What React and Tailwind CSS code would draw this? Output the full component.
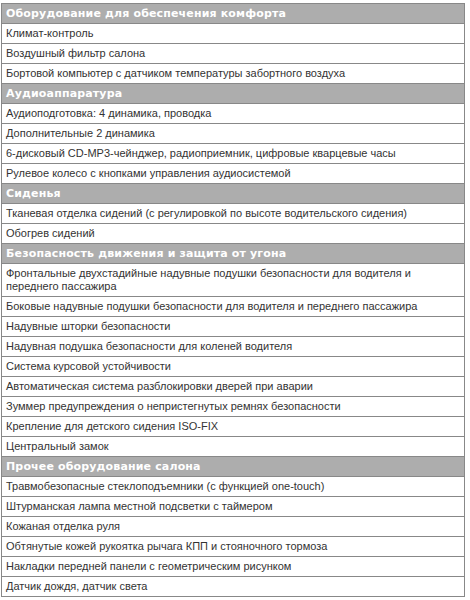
import React from 'react';

const sections = [
  {
    title: 'Оборудование для обеспечения комфорта',
    items: [
      'Климат-контроль',
      'Воздушный фильтр салона',
      'Бортовой компьютер с датчиком температуры забортного воздуха',
    ],
  },
  {
    title: 'Аудиоаппаратура',
    items: [
      'Аудиоподготовка: 4 динамика, проводка',
      'Дополнительные 2 динамика',
      '6-дисковый CD-MP3-чейнджер, радиоприемник, цифровые кварцевые часы',
      'Рулевое колесо с кнопками управления аудиосистемой',
    ],
  },
  {
    title: 'Сиденья',
    items: [
      'Тканевая отделка сидений (с регулировкой по высоте водительского сидения)',
      'Обогрев сидений',
    ],
  },
  {
    title: 'Безопасность движения и защита от угона',
    items: [
      'Фронтальные двухстадийные надувные подушки безопасности для водителя и переднего пассажира',
      'Боковые надувные подушки безопасности для водителя и переднего пассажира',
      'Надувные шторки безопасности',
      'Надувная подушка безопасности для коленей водителя',
      'Система курсовой устойчивости',
      'Автоматическая система разблокировки дверей при аварии',
      'Зуммер предупреждения о непристегнутых ремнях безопасности',
      'Крепление для детского сидения ISO-FIX',
      'Центральный замок',
    ],
  },
  {
    title: 'Прочее оборудование салона',
    items: [
      'Травмобезопасные стеклоподъемники (с функцией one-touch)',
      'Штурманская лампа местной подсветки с таймером',
      'Кожаная отделка руля',
      'Обтянутые кожей рукоятка рычага КПП и стояночного тормоза',
      'Накладки передней панели с геометрическим рисунком',
      'Датчик дождя, датчик света',
    ],
  },
];

export default function App() {
  return (
    <div className="bg-white min-h-[600px] pt-[3px] pl-[1px] font-['Liberation_Sans',sans-serif] text-[11px] leading-[13px] text-[#333]">
      <table className="w-[464px] border-collapse">
        <tbody>
          {sections.map((s) => (
            <React.Fragment key={s.title}>
              <tr>
                <td className="border border-[#888] bg-[#adadad] text-white font-bold font-['DejaVu_Sans',sans-serif] tracking-[0.15px] pl-[4px] pr-2 py-[3px]">
                  {s.title}
                </td>
              </tr>
              {s.items.map((item) => (
                <tr key={item}>
                  <td className="border border-[#888] bg-white pl-[4px] pr-2 py-[3px]">{item}</td>
                </tr>
              ))}
            </React.Fragment>
          ))}
        </tbody>
      </table>
    </div>
  );
}
